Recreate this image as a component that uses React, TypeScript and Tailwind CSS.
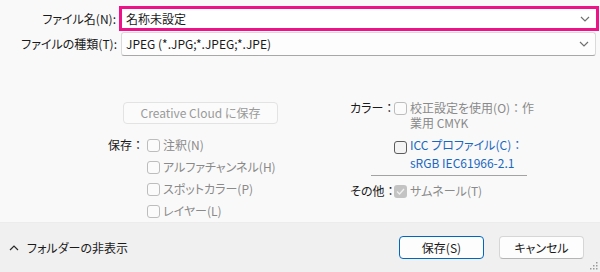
import React from 'react';

const font = { fontFamily: '"Noto Sans CJK JP", "Noto Sans", sans-serif' };

// full-width colon keeps its side spacing, as in the dialog
const Colon: React.FC = () => <span className="[font-feature-settings:normal]">：</span>;

const Chevron: React.FC<{ up?: boolean; className?: string }> = ({ up, className }) => (
  <svg width="10" height="6" viewBox="0 0 10 6" className={className}>
    <polyline
      points={up ? '1,5 5,1 9,5' : '1,1 5,5 9,1'}
      fill="none"
      stroke="currentColor"
      strokeWidth="1.2"
    />
  </svg>
);

const Box: React.FC<{ variant?: 'disabled' | 'enabled' | 'checked' }> = ({ variant = 'disabled' }) => {
  if (variant === 'checked') {
    return (
      <span className="w-[13px] h-[13px] rounded-[3px] bg-[#c3c3c3] flex items-center justify-center shrink-0">
        <svg width="9" height="7" viewBox="0 0 9 7">
          <polyline points="1,3.5 3.5,6 8,1" fill="none" stroke="#efefef" strokeWidth="1.3" />
        </svg>
      </span>
    );
  }
  return (
    <span
      className={
        variant === 'enabled'
          ? 'block w-[13px] h-[13px] rounded-[3px] border border-[#5c5c5c] bg-[#f4f4f4] shrink-0'
          : 'block w-[13px] h-[13px] rounded-[3px] border border-[#bdbdbd] bg-[#fbfbfb] shrink-0'
      }
    />
  );
};

const SaveOption: React.FC<{ label?: string; text: string }> = ({ label, text }) => (
  <div className="flex items-center h-[22px]">
    <span className="w-[39px] text-right text-[#1a1a1a] whitespace-nowrap">
      {label && (
        <>
          {label}
          <Colon />
        </>
      )}
    </span>
    <span className="ml-[3px]">
      <Box />
    </span>
    <span className="ml-[3px] text-[#8a8a8a] whitespace-nowrap">{text}</span>
  </div>
);

export default function App() {
  return (
    <div
      style={font}
      className="w-[600px] h-[272px] bg-[#f9f9f9] flex flex-col text-[12px] leading-[16px] overflow-hidden [font-feature-settings:'palt']"
    >
      {/* File name / type */}
      <div className="flex items-center h-[25px] mt-[6px]">
        <span className="w-[116px] text-right text-[#1a1a1a] whitespace-nowrap">ファイル名(N):</span>
        <div className="ml-[3px] w-[480px] h-[25px] border-[3px] border-[#ee1289] bg-white flex items-center justify-between pl-[4px] pr-[6px]">
          <span className="text-[#1a1a1a]">名称未設定</span>
          <Chevron className="text-[#707070]" />
        </div>
      </div>
      <div className="flex items-center h-[24px] mt-[1px]">
        <span className="w-[117px] text-right text-[#1a1a1a] whitespace-nowrap">ファイルの種類(T):</span>
        <div className="ml-[4px] w-[475px] h-[24px] border border-[#dadada] border-b-[#a8a8a8] rounded-[3px] bg-[#fdfdfd] flex items-center justify-between pl-[4px] pr-[6px]">
          <span className="text-[#1a1a1a]">JPEG (*.JPG;*.JPEG;*.JPE)</span>
          <Chevron className="text-[#707070]" />
        </div>
      </div>

      {/* Options */}
      <div className="flex-1 flex">
        <div className="ml-[105px] w-[245px] flex flex-col pt-[46px]">
          <div className="ml-[18px] w-[155px] h-[22px] border border-[#e3e3e3] rounded-[4px] bg-[#fbfbfb] flex items-center justify-center text-[#9a9a9a]">
            Creative Cloud に保存
          </div>
          <div className="mt-[10px] flex flex-col">
            <SaveOption label="保存" text="注釈(N)" />
            <SaveOption text="アルファチャンネル(H)" />
            <SaveOption text="スポットカラー(P)" />
            <SaveOption text="レイヤー(L)" />
          </div>
        </div>

        <div className="flex flex-col pt-[44px]">
          <div className="flex items-start">
            <span className="w-[42px] text-right text-[#1a1a1a] leading-[15px] whitespace-nowrap">
              カラー
              <Colon />
            </span>
            <span className="ml-[2px] mt-[2px]">
              <Box />
            </span>
            <span className="ml-[3px] text-[#8a8a8a] leading-[15px] whitespace-nowrap">
              校正設定を使用(O)
              <Colon />作
              <br />
              業用 CMYK
            </span>
          </div>
          <div className="flex items-start mt-[8px]">
            <span className="w-[42px]" />
            <span className="ml-[2px] mt-[3px]">
              <Box variant="enabled" />
            </span>
            <span className="ml-[3px] text-[#1867c0] leading-[18px] -mt-[2px] whitespace-nowrap">
              ICC プロファイル(C)
              <Colon />
              <br />
              sRGB IEC61966-2.1
            </span>
          </div>
          <div className="ml-[21px] w-[156px] h-px bg-[#a3a3a3] mt-[3px]" />
          <div className="flex items-center mt-[7px]">
            <span className="w-[42px] text-right text-[#1a1a1a] whitespace-nowrap">
              その他
              <Colon />
            </span>
            <span className="ml-[2px]">
              <Box variant="checked" />
            </span>
            <span className="ml-[3px] text-[#8a8a8a] whitespace-nowrap">サムネール(T)</span>
          </div>
        </div>
      </div>

      {/* Footer */}
      <div className="h-[55px] bg-[#f0f0f0] border-t border-[#ececec] flex items-center relative">
        <div className="flex items-center ml-[9px] text-[#1a1a1a]">
          <Chevron up className="text-[#2a2a2a]" />
          <span className="ml-[8px]">フォルダーの非表示</span>
        </div>
        <div className="ml-auto mr-[16px] flex items-center gap-[15px]">
          <button className="w-[85px] h-[23px] rounded-[4px] border border-[#0067c0] bg-[#fdfdfd] text-[#1a1a1a] flex items-center justify-center">
            保存(S)
          </button>
          <button className="w-[85px] h-[23px] rounded-[4px] border border-[#d6d6d6] border-b-[#b5b5b5] bg-[#fdfdfd] text-[#1a1a1a] flex items-center justify-center">
            キャンセル
          </button>
        </div>
        <svg width="9" height="9" viewBox="0 0 9 9" className="absolute right-[2px] bottom-[2px]">
          {[
            [7, 1],
            [7, 4],
            [4, 4],
            [7, 7],
            [4, 7],
            [1, 7],
          ].map(([x, y], i) => (
            <rect key={i} x={x} y={y} width="1.5" height="1.5" fill="#9a9a9a" />
          ))}
        </svg>
      </div>
    </div>
  );
}
